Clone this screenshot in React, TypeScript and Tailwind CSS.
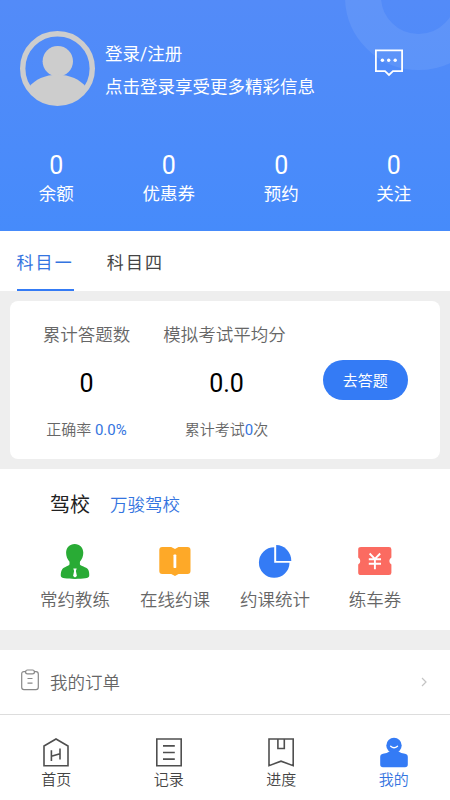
import type { ReactNode } from "react"

const stats = [
  { label: "余额", value: "0" },
  { label: "优惠券", value: "0" },
  { label: "预约", value: "0" },
  { label: "关注", value: "0" },
]

function Avatar() {
  return (
    <svg viewBox="0 0 75 75" className="size-[75px] shrink-0">
      <circle cx="37.5" cy="37.5" r="34.8" fill="none" stroke="#cdcdcd" strokeWidth="5.4" />
      <circle cx="37.8" cy="30.2" r="15.2" fill="#cdcdcd" />
      <path d="M9 56C15 48.5 25 43.8 37.5 43.8S60 48.5 66 56A34.8 34.8 0 0 1 9 56Z" fill="#cdcdcd" />
    </svg>
  )
}

function MessageIcon() {
  return (
    <svg viewBox="0 0 28 28" className="h-7 w-7" fill="none" stroke="#fff" strokeWidth="1.8">
      <path d="M.9 1.4H27.1V22.2H18L14 26L10 22.2H.9Z" />
      <g fill="#fff" stroke="none">
        <circle cx="7.4" cy="11.3" r="1.7" />
        <circle cx="13.7" cy="11.3" r="1.7" />
        <circle cx="20.2" cy="11.3" r="1.7" />
      </g>
    </svg>
  )
}

function CoachIcon() {
  return (
    <svg viewBox="0 0 36 36" className="size-9">
      <path
        d="M17.7 .9C22.8 .9 26.3 4.7 26.3 9.8C26.3 13.4 25 16.5 22.9 18.7V21.2C23.2 23 29.5 23.8 31.1 26.5C32 28 32.4 30.2 32.2 33C31.9 35.3 26.5 35.9 18 35.9S4.1 35.3 3.8 33C3.6 30.2 4.2 28 5.1 26.5C6.7 23.8 12 23 12.5 21.2V18.7C10.4 16.5 9.1 13.4 9.1 9.8C9.1 4.7 12.6 .9 17.7 .9Z"
        fill="#29ab35"
      />
      <path d="M16.3 25.5H19.7L18.9 28L19.9 33L18 34.5L16.1 33L17.1 28Z" fill="#fff" />
    </svg>
  )
}

function LessonIcon() {
  return (
    <svg viewBox="0 0 36 36" className="size-9">
      <path
        d="M5.2 4H14.2L18 5.9L21.5 4H30.5Q33.5 4 33.5 7V28Q33.5 31 30.5 31H21.5L18 33L14.2 31H5.2Q2.3 31 2.3 28V7Q2.3 4 5.2 4Z"
        fill="#fea928"
      />
      <rect x="16.5" y="11.5" width="2.8" height="13.5" rx=".7" fill="#fff" />
    </svg>
  )
}

function ChartIcon() {
  return (
    <svg viewBox="0 0 36 36" className="size-9" fill="#347bf5">
      <path d="M17.2 4.2V19.7H32.5A15.3 15.3 0 1 1 17.2 4.2Z" />
      <path d="M19.2 2V17.9H34.3A15.1 15.9 0 0 0 19.2 2Z" />
    </svg>
  )
}

function TicketIcon() {
  return (
    <svg viewBox="0 0 36 36" className="size-9">
      <path
        d="M4 4H32Q34.4 4 34.4 6.4V14.5A4 4 0 0 0 34.4 21.5V29.7Q34.4 32 32 32H4Q1.2 32 1.2 29.7V21.5A4 4 0 0 0 1.2 14.5V6.4Q1.2 4 4 4Z"
        fill="#fb6b61"
      />
      <path
        d="M12.6 10.5L17.9 15.8L23.2 10.5M17.9 15.5V26.2M11.8 16.3H24M11.8 20.7H24"
        fill="none"
        stroke="#fff"
        strokeWidth="1.9"
      />
    </svg>
  )
}

const services = [
  { label: "常约教练", icon: <CoachIcon /> },
  { label: "在线约课", icon: <LessonIcon /> },
  { label: "约课统计", icon: <ChartIcon /> },
  { label: "练车券", icon: <TicketIcon /> },
]

function LineIcon({ children }: { children: ReactNode }) {
  return (
    <svg viewBox="0 0 32 32" className="size-8" fill="none" stroke="#4f4f4f" strokeWidth="1.6">
      {children}
    </svg>
  )
}

const tabs = [
  {
    label: "首页",
    icon: (
      <LineIcon>
        <path d="M4 9L16 2L28 9V28.7H4ZM11.4 24V13.2M20 22.5V11.5M11.4 19.3L20 16.7" />
      </LineIcon>
    ),
  },
  {
    label: "记录",
    icon: (
      <LineIcon>
        <path d="M3.8 2H28.2V28.7H3.8ZM10 8.9H21.8M10 15.5H21.8M10 22.1H21.8" />
      </LineIcon>
    ),
  },
  {
    label: "进度",
    icon: (
      <LineIcon>
        <path d="M4 2H28.2V28.7L16 24.2L4 28.7ZM12.9 2V11.5H19.3V2" />
      </LineIcon>
    ),
  },
  {
    label: "我的",
    active: true,
    icon: (
      <svg viewBox="0 0 32 32" className="size-8" fill="#347bf5">
        <circle cx="16" cy="8.5" r="7.7" />
        <path d="M11.5 14.5H20.5Q23 16.2 27 16.8Q29.8 17.4 29.8 20V27.5Q29.8 30.2 27 30.2H5Q2.2 30.2 2.2 27.5V20Q2.2 17.4 5 16.8Q9 16.2 11.5 14.5Z" />
        <path d="M12.7 9.3Q16 12.3 19.5 9.3" fill="none" stroke="#fff" strokeWidth="1.4" strokeLinecap="round" />
      </svg>
    ),
  },
]

export default function App() {
  return (
    <div className="flex h-[800px] w-[450px] flex-col overflow-hidden bg-white font-['Roboto','Noto_Sans_CJK_SC',sans-serif] text-[17.5px] font-[350] text-[#666]">
      {/* Profile header */}
      <header className="relative h-[231px] shrink-0 overflow-hidden bg-gradient-to-b from-[#538bf8] to-[#468bfb] text-white">
        <div className="absolute -top-[77px] left-[345px] size-[147px] rounded-full border-[36px] border-white/8" />
        <div className="relative flex h-[106px] items-start pt-[31px] pl-5">
          <Avatar />
          <div className="ml-2.5 flex flex-1 flex-col pt-[7px] font-normal">
            <span className="h-[33px] leading-8">登录/注册</span>
            <span className="h-8 leading-8">点击登录享受更多精彩信息</span>
          </div>
          <div className="mt-[18px] mr-[47px]">
            <MessageIcon />
          </div>
        </div>
        <div className="mt-[45px] grid grid-cols-4 text-center font-normal">
          {stats.map((s) => (
            <div key={s.label} className="flex flex-col">
              <span className="text-[25px] leading-[29px]">{s.value}</span>
              <span className="leading-7">{s.label}</span>
            </div>
          ))}
        </div>
      </header>

      {/* Subject tabs */}
      <div className="flex h-[60px] shrink-0 gap-[33px] pl-[16.5px] text-[17px] tracking-[2.1px]">
        <button className="h-full border-b-2 border-[#347bf5] pt-2 font-normal text-[#3474e0]">科目一</button>
        <button className="h-full border-b-2 border-transparent pt-2 font-normal text-[#444]">科目四</button>
      </div>

      {/* Practice summary */}
      <section className="h-[178px] shrink-0 bg-[#eee] p-2.5">
        <div className="flex h-[158px] rounded-lg bg-white">
          <div className="ml-[19px] flex w-[115px] flex-col items-center whitespace-nowrap pt-[19px]">
            <span className="leading-[30px]">累计答题数</span>
            <span className="mt-[18px] text-[25px] leading-[32px] font-normal text-black">0</span>
            <span className="mt-4 text-[15px] leading-[28px]">
              正确率 <span className="font-normal text-[#3474e0]">0.0%</span>
            </span>
          </div>
          <div className="ml-[8px] flex w-[149px] flex-col items-center whitespace-nowrap pt-[19px]">
            <span className="-ml-1 leading-[30px]">模拟考试平均分</span>
            <span className="mt-[18px] text-[25px] leading-[32px] font-normal text-black">0.0</span>
            <span className="mt-4 text-[15px] leading-[28px]">
              累计考试<span className="font-normal text-[#3474e0]">0</span>次
            </span>
          </div>
          <button className="mt-[59px] ml-[21.5px] h-10 w-[85.5px] rounded-full bg-[#347bf5] pt-0.5 text-[15px] font-normal text-white">
            去答题
          </button>
        </div>
      </section>

      {/* Driving school */}
      <section className="h-[161px] shrink-0 pt-[21px]">
        <div className="flex h-[30px] items-center pl-[50px]">
          <h2 className="text-[20px] font-normal text-[#222]">驾校</h2>
          <span className="ml-5 text-[#3474e0]">万骏驾校</span>
        </div>
        <div className="mt-[23px] grid grid-cols-4 px-[25px]">
          {services.map((s) => (
            <div key={s.label} className="flex flex-col items-center">
              {s.icon}
              <span className="mt-[7px] leading-[28px]">{s.label}</span>
            </div>
          ))}
        </div>
      </section>

      <div className="h-5 shrink-0 bg-[#eee]" />

      {/* Orders */}
      <div className="flex h-[65px] shrink-0 items-center border-b border-[#ddd] pr-[23px] pl-[21px]">
        <svg viewBox="0 0 18 22" className="-mt-1 h-[22px] w-[18px]" fill="none" stroke="#888" strokeWidth="1.2">
          <path d="M5 2.6H3Q.7 2.6 .7 5V18.2Q.7 20.6 3 20.6H15Q17.3 20.6 17.3 18.2V5Q17.3 2.6 15 2.6H13" />
          <path d="M6.5 1H11.5Q13.4 1 13.4 2.9T11.5 4.8H6.5Q4.6 4.8 4.6 2.9T6.5 1ZM6.5 9.5H11.5M6.5 14.2H11.5" />
        </svg>
        <span className="ml-[11px] flex-1 pt-0.5">我的订单</span>
        <svg viewBox="0 0 6 10" className="h-2.5 w-1.5" fill="none" stroke="#c4c4c4" strokeWidth="1.2">
          <path d="M1 1L5 5L1 9" />
        </svg>
      </div>

      {/* Bottom navigation */}
      <nav className="grid h-[85px] shrink-0 grid-cols-4 pt-[22px] text-[15px]">
        {tabs.map((t) => (
          <div key={t.label} className={`flex flex-col items-center ${t.active ? "text-[#3474e0]" : "text-[#444]"}`}>
            {t.icon}
            <span className="leading-[23px]">{t.label}</span>
          </div>
        ))}
      </nav>
    </div>
  )
}
